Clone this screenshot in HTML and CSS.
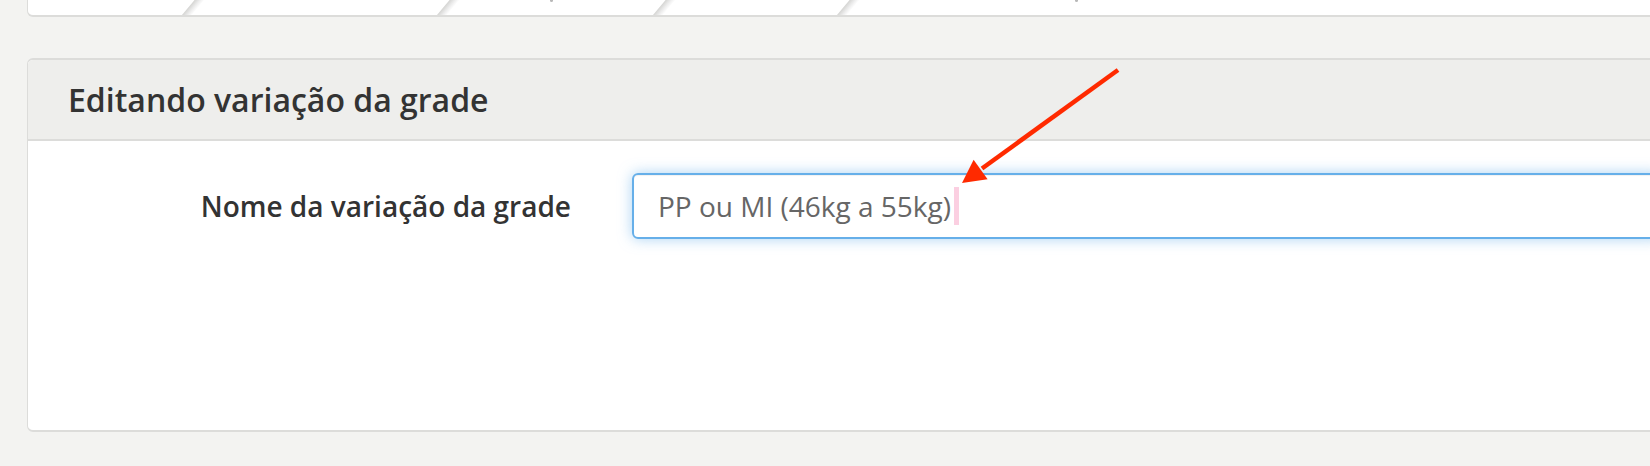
FILE: index.html
```html
<!DOCTYPE html>
<html lang="pt-BR">
<head>
<meta charset="utf-8">
<title>Editando variação da grade</title>
<link rel="stylesheet" href="styles.css">
</head>
<body>
<div class="page">
  <div class="steps">
    <div class="step s1"></div>
    <div class="step s2"></div>
    <div class="step s3"><span class="tick"></span></div>
    <div class="step s4"></div>
    <div class="step s5"><span class="tick"></span></div>
  </div>

  <section class="card">
    <header class="card-head">
      <h2 class="card-title">Editando variação da grade</h2>
    </header>
    <div class="card-body">
      <div class="field">
        <label class="field-label">Nome da variação da grade</label>
        <div class="input" role="textbox">PP ou MI (46kg a 55kg)<span class="caret"></span></div>
      </div>
    </div>
  </section>
</div>

<svg class="annot" width="1650" height="466" viewBox="0 0 1650 466" aria-hidden="true">
  <line x1="1118" y1="70" x2="982" y2="168.5" stroke="#ff2a00" stroke-width="4.5" stroke-linecap="butt"/>
  <polygon points="962,183 973.6,159.8 987.6,179.2" fill="#ff2a00"/>
</svg>
</body>
</html>
```

FILE: styles.css
```css
html, body {
  margin: 0;
  padding: 0;
  background: #f3f3f1;
  overflow: hidden;
}

body {
  width: 1650px;
  height: 466px;
  position: relative;
  font-family: "Open Sans", "Noto Sans", "Liberation Sans", sans-serif;
  color: #333;
}

.page {
  padding-left: 27px;
}

/* top card (steps strip, mostly scrolled off) */
.steps {
  width: 1700px;
  height: 15px;
  display: flex;
  background: #fff;
  border: solid #dcdcda;
  border-width: 0 0 2px 1px;
  border-radius: 0 0 6px 6px;
  overflow: hidden;
}

.step {
  position: relative;
  flex: none;
}

.step::after {
  content: "";
  position: absolute;
  right: -5px;
  top: -10px;
  bottom: 0;
  width: 10px;
  background: linear-gradient(to right, #d4d4d2, #ededed 55%, #fff);
  transform: skewX(-40deg);
  transform-origin: bottom;
}

.s1 { width: 159px; }
.s2 { width: 255px; }
.s3 { width: 216px; }
.s4 { width: 184px; }
.s5 { flex: 1; }
.s5::after { display: none; }

.tick {
  position: absolute;
  top: 0;
  width: 3px;
  height: 2px;
  border-radius: 0 0 2px 2px;
  background: #b8b8b8;
}
.s3 .tick { left: 108px; }
.s5 .tick { left: 233px; }

/* edit card */
.card {
  width: 1700px;
  margin-top: 41px;
  background: #fff;
  border: 1px solid #dcdcda;
  border-top-width: 2px;
  border-bottom-width: 2px;
  border-radius: 6px;
  overflow: hidden;
}

.card-head {
  height: 79px;
  background: #eeeeec;
  border-bottom: 2px solid #dcdcda;
  display: flex;
  align-items: center;
  padding-left: 40px;
}

.card-title {
  margin: 0;
  font-size: 32px;
  font-weight: 600;
  color: #333;
  line-height: 1;
}

.card-body {
  height: 289px;
  box-sizing: border-box;
  padding-top: 32px;
}

.field {
  display: flex;
  align-items: center;
  gap: 61px;
}

.field-label {
  width: 543px;
  flex: none;
  text-align: right;
  font-size: 28px;
  font-weight: 600;
  color: #333;
}

.input {
  width: 1030px;
  height: 66px;
  box-sizing: border-box;
  border: 2px solid #66afe9;
  border-radius: 6px;
  box-shadow: inset 0 1px 1px rgba(0,0,0,.06), 0 0 14px rgba(102,175,233,.55);
  padding: 0 24px;
  display: flex;
  align-items: center;
  font-size: 28px;
  font-weight: 400;
  color: #666;
  white-space: pre;
}

.caret {
  display: inline-block;
  width: 5px;
  height: 38px;
  margin-left: 3px;
  background: #fbcfe1;
}

.annot {
  position: absolute;
  left: 0;
  top: 0;
  pointer-events: none;
}
```
